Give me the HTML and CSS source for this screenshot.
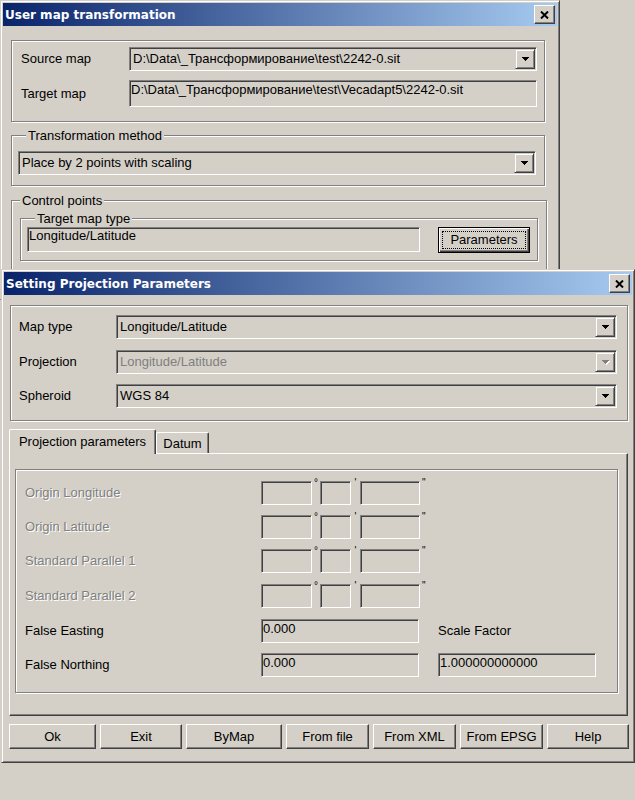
FILE: index.html
```html
<!DOCTYPE html>
<html>
<head>
<meta charset="utf-8">
<title>User map transformation</title>
<link rel="stylesheet" href="styles.css">
</head>
<body>
<div class="win win-main">
  <div class="titlebar">
    <span class="title">User map transformation</span>
    <span class="close"><svg width="9" height="8" viewBox="0 0 9 8"><path d="M1 0.5L8 7.5M8 0.5L1 7.5" stroke="#000" stroke-width="2"/></svg></span>
  </div>
  <div class="body1">
    <div class="group g-files">
      <div class="frow">
        <span class="lbl">Source map</span>
        <div class="combo w408">
          <span class="ctext">D:\Data\_Трансформирование\test\2242-0.sit</span>
          <span class="dd"><svg width="7" height="4" viewBox="0 0 7 4"><path d="M0 0h7v1h-1v1h-1v1h-1v1h-1v-1h-1v-1h-1v-1h-1z" fill="#000"/></svg></span>
        </div>
      </div>
      <div class="frow">
        <span class="lbl">Target map</span>
        <div class="field f-target">D:\Data\_Трансформирование\test\Vecadapt5\2242-0.sit</div>
      </div>
    </div>
    <div class="group g-method">
      <div class="caption">Transformation method</div>
      <div class="combo w518">
        <span class="ctext">Place by 2 points with scaling</span>
        <span class="dd"><svg width="7" height="4" viewBox="0 0 7 4"><path d="M0 0h7v1h-1v1h-1v1h-1v1h-1v-1h-1v-1h-1v-1h-1z" fill="#000"/></svg></span>
      </div>
    </div>
    <div class="group g-points">
      <div class="caption">Control points</div>
      <div class="group g-type">
        <div class="caption">Target map type</div>
        <div class="typerow">
          <div class="field f-type">Longitude/Latitude</div>
          <div class="btn btn-default"><span class="focus">Parameters</span></div>
        </div>
      </div>
    </div>
  </div>
</div>

<div class="win win-proj">
  <div class="titlebar">
    <span class="title">Setting Projection Parameters</span>
    <span class="close"><svg width="9" height="8" viewBox="0 0 9 8"><path d="M1 0.5L8 7.5M8 0.5L1 7.5" stroke="#000" stroke-width="2"/></svg></span>
  </div>
  <div class="body2">
    <div class="group g-proj">
      <div class="prow">
        <span class="plbl">Map type</span>
        <div class="combo w501">
          <span class="ctext">Longitude/Latitude</span>
          <span class="dd"><svg width="7" height="4" viewBox="0 0 7 4"><path d="M0 0h7v1h-1v1h-1v1h-1v1h-1v-1h-1v-1h-1v-1h-1z" fill="#000"/></svg></span>
        </div>
      </div>
      <div class="prow">
        <span class="plbl">Projection</span>
        <div class="combo w501 disabled">
          <span class="ctext">Longitude/Latitude</span>
          <span class="dd"><svg width="8" height="5" viewBox="0 0 8 5"><path d="M1 1h7v1h-1v1h-1v1h-1v1h-1v-1h-1v-1h-1v-1h-1z" fill="#fff"/><path d="M0 0h7v1h-1v1h-1v1h-1v1h-1v-1h-1v-1h-1v-1h-1z" fill="#808080"/></svg></span>
        </div>
      </div>
      <div class="prow">
        <span class="plbl">Spheroid</span>
        <div class="combo w501">
          <span class="ctext">WGS 84</span>
          <span class="dd"><svg width="7" height="4" viewBox="0 0 7 4"><path d="M0 0h7v1h-1v1h-1v1h-1v1h-1v-1h-1v-1h-1v-1h-1z" fill="#000"/></svg></span>
        </div>
      </div>
    </div>

    <div class="tabs">
      <div class="tabstrip">
        <div class="tab active">Projection parameters</div>
        <div class="tab">Datum</div>
      </div>
      <div class="panel">
        <div class="group inner">
          <div class="drow">
            <span class="dlbl dis">Origin Longitude</span>
            <div class="field f-deg"></div><span class="mark m-deg">°</span>
            <div class="field f-min"></div><span class="mark m-min">'</span>
            <div class="field f-sec"></div><span class="mark m-sec">"</span>
          </div>
          <div class="drow">
            <span class="dlbl dis">Origin Latitude</span>
            <div class="field f-deg"></div><span class="mark m-deg">°</span>
            <div class="field f-min"></div><span class="mark m-min">'</span>
            <div class="field f-sec"></div><span class="mark m-sec">"</span>
          </div>
          <div class="drow">
            <span class="dlbl dis">Standard Parallel 1</span>
            <div class="field f-deg"></div><span class="mark m-deg">°</span>
            <div class="field f-min"></div><span class="mark m-min">'</span>
            <div class="field f-sec"></div><span class="mark m-sec">"</span>
          </div>
          <div class="drow">
            <span class="dlbl dis">Standard Parallel 2</span>
            <div class="field f-deg"></div><span class="mark m-deg">°</span>
            <div class="field f-min"></div><span class="mark m-min">'</span>
            <div class="field f-sec"></div><span class="mark m-sec">"</span>
          </div>
          <div class="drow">
            <span class="dlbl">False Easting</span>
            <div class="field f-num">0.000</div>
            <span class="scale-lbl">Scale Factor</span>
          </div>
          <div class="drow">
            <span class="dlbl">False Northing</span>
            <div class="field f-num">0.000</div>
            <div class="field f-num f-scale">1.000000000000</div>
          </div>
        </div>
      </div>
    </div>

    <div class="btnrow">
      <div class="btn b-ok">Ok</div>
      <div class="btn b-exit">Exit</div>
      <div class="btn b-bymap">ByMap</div>
      <div class="btn b-file">From file</div>
      <div class="btn b-xml">From XML</div>
      <div class="btn b-epsg">From EPSG</div>
      <div class="btn b-help">Help</div>
    </div>
  </div>
</div>
</body>
</html>
```

FILE: styles.css
```css
* { box-sizing: border-box; }
html, body { margin: 0; padding: 0; }
body {
  background: #d4d0c8;
  width: 635px;
  height: 800px;
  position: relative;
  overflow: hidden;
  font-family: "Liberation Sans", Arial, sans-serif;
  font-size: 13px;
  line-height: 16px;
  color: #000;
}

/* window frames */
.win {
  position: absolute;
  background: #d4d0c8;
  border: 1px solid;
  border-color: #d4d0c8 #404040 #404040 #d4d0c8;
  box-shadow: inset 1px 1px #fff, inset -1px -1px #808080;
  padding: 2px;
}
.win-main { left: 0; top: 0; width: 560px; height: 300px; }
.win-proj { left: 1px; top: 269px; width: 634px; height: 494px; }

.titlebar {
  height: 23px;
  display: flex;
  align-items: center;
  justify-content: space-between;
  padding: 0 2px;
  background: linear-gradient(to right, #0a246a, #a6caf0);
  color: #fff;
  font: bold 12px "DejaVu Sans", Verdana, sans-serif;
}
.close {
  width: 21px;
  height: 19px;
  background: #d4d0c8;
  border: 1px solid;
  border-color: #fff #404040 #404040 #fff;
  box-shadow: inset -1px -1px #808080;
  display: flex;
  align-items: center;
  justify-content: center;
}
.close svg { display: block; }

/* etched group boxes */
.group {
  border: 1px solid #808080;
  box-shadow: inset 1px 1px #fff, 1px 1px #fff;
}
.caption {
  margin: -8px 0 0 8px;
  padding: 0 2px;
  background: #d4d0c8;
  width: max-content;
  height: 15px;
  line-height: 15px;
}

/* sunken controls */
.combo {
  display: flex;
  height: 24px;
  border: 1px solid;
  border-color: #808080 #fff #fff #808080;
  box-shadow: inset 1px 1px #404040, inset -1px -1px #d4d0c8;
  padding: 1px;
  background: #d4d0c8;
}
.ctext {
  flex: 1;
  padding-left: 2px;
  line-height: 20px;
  white-space: nowrap;
  overflow: hidden;
}
.dd {
  width: 20px;
  height: 20px;
  border: 1px solid;
  border-color: #d4d0c8 #404040 #404040 #d4d0c8;
  box-shadow: inset 1px 1px #fff, inset -1px -1px #808080;
  display: flex;
  align-items: center;
  justify-content: center;
}
.dd svg { display: block; }
.disabled .ctext { color: #808080; }
.disabled .dd svg { margin: 1px 0 0 1px; }

.field {
  height: 24px;
  border: 1px solid;
  border-color: #808080 #fff #fff #808080;
  box-shadow: inset 1px 1px #404040, inset -1px -1px #d4d0c8;
  padding: 1px 2px 0 1px;
  background: #d4d0c8;
  white-space: nowrap;
  overflow: hidden;
  line-height: 16px;
}

/* buttons */
.btn {
  height: 25px;
  border: 1px solid;
  border-color: #fff #404040 #404040 #fff;
  box-shadow: inset -1px -1px #808080;
  display: flex;
  align-items: center;
  justify-content: center;
  background: #d4d0c8;
}
.btn-default {
  width: 92px;
  height: 26px;
  margin-left: 18px;
  border: 1px solid #000;
  box-shadow: inset 1px 1px #fff, inset -1px -1px #404040, inset -2px -2px #808080;
  padding: 3px;
}
.focus {
  flex: 1;
  align-self: stretch;
  border: 1px dotted #000;
  display: flex;
  align-items: center;
  justify-content: center;
}

/* dialog 1 */
.body1 { padding-left: 8px; }
.g-files {
  margin-top: 14px;
  width: 534px;
  height: 82px;
  padding: 6px 0 0 9px;
}
.frow { display: flex; align-items: center; }
.frow + .frow { margin-top: 9px; }
.lbl { width: 108px; }
.w408 { width: 408px; }
.f-target { width: 408px; height: 27px; padding-top: 1px; }

.g-method {
  margin-top: 13px;
  width: 534px;
  height: 51px;
  padding-left: 6px;
}
.g-method .combo { margin-top: 8px; }
.w518 { width: 518px; }

.g-points {
  margin-top: 14px;
  width: 536px;
  height: 100px;
}
.g-type {
  margin: 10px 0 0 8px;
  width: 518px;
  height: 43px;
  padding-left: 6px;
}
.typerow { display: flex; align-items: flex-start; margin-top: 1px; }
.f-type { width: 393px; height: 25px; padding-top: 0; }

/* dialog 2 */
.g-proj {
  margin: 10px 0 0 6px;
  width: 618px;
  height: 116px;
  padding: 9px 0 0 8px;
}
.prow { display: flex; align-items: center; }
.prow:nth-child(2) { margin-top: 11px; }
.prow:nth-child(3) { margin-top: 10px; }
.plbl { width: 97px; }
.w501 { width: 501px; }

.tabs { margin: 8px 0 0 5px; width: 619px; }
.tabstrip {
  display: flex;
  align-items: flex-end;
  height: 24px;
  position: relative;
  z-index: 1;
}
.tab {
  height: 21px;
  width: 53px;
  border: 1px solid;
  border-color: #fff #404040 transparent #fff;
  border-bottom: none;
  border-radius: 2px 2px 0 0;
  box-shadow: inset -1px 0 #808080;
  background: #d4d0c8;
  display: flex;
  justify-content: center;
  align-items: center;
  padding-top: 1px;
}
.tab.active {
  width: 147px;
  height: 25px;
  margin-bottom: -1px;
  padding-bottom: 2px;
}
.panel {
  width: 619px;
  height: 263px;
  border: 1px solid;
  border-color: #fff #404040 #404040 #fff;
  box-shadow: inset -1px -1px #808080;
  padding: 15px 0 0 5px;
}
.inner {
  width: 603px;
  height: 224px;
  padding: 11px 0 0 9px;
}
.drow { display: flex; align-items: center; height: 24px; }
.drow:nth-child(2), .drow:nth-child(3), .drow:nth-child(6) { margin-top: 10px; }
.drow:nth-child(4), .drow:nth-child(5) { margin-top: 11px; }
.dlbl { width: 236px; }
.dis { color: #808080; text-shadow: 1px 1px #fff; }
.f-deg { width: 51px; }
.f-min { width: 31px; }
.f-sec { width: 60px; }
.mark {
  align-self: flex-start;
  margin-top: -3px;
  font-size: 10px;
  line-height: 10px;
  text-align: center;
}
.m-deg { width: 8px; }
.m-min { width: 9px; }
.m-sec { width: 8px; padding-left: 2px; text-align: left; }
.f-num { width: 158px; }
.f-scale { margin-left: 19px; }
.scale-lbl { margin-left: 19px; }

.btnrow { display: flex; gap: 4px; margin: 8px 0 0 5px; }
.b-ok { width: 87px; }
.b-exit { width: 82px; }
.b-bymap { width: 96px; }
.b-file { width: 83px; }
.b-xml { width: 83px; }
.b-epsg { width: 83px; }
.b-help { width: 82px; }
```
